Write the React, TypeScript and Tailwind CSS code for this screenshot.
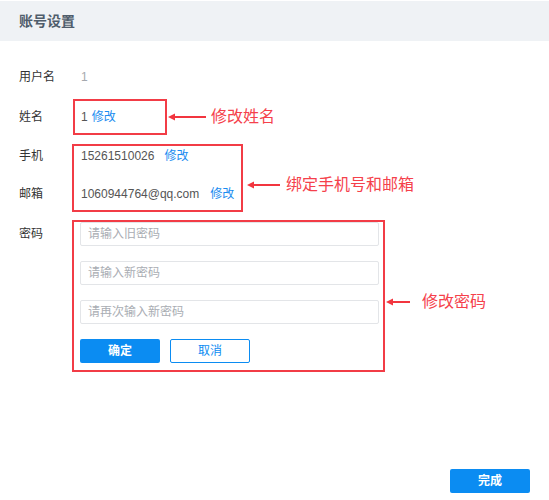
import React from "react";

const font = { fontFamily: '"Liberation Sans", "Noto Sans CJK SC", sans-serif' };

// small left-pointing red arrow used by the callouts
function Arrow({ length }: { length: number }) {
  return (
    <svg width={length} height={8} viewBox={`0 0 ${length} 8`} className="shrink-0">
      <line x1={4} y1={4} x2={length} y2={4} stroke="#f2353f" strokeWidth={2} />
      <polygon points="0,4 7,0.5 7,7.5" fill="#f2353f" />
    </svg>
  );
}

function Callout({ length, gap, text }: { length: number; gap: number; text: string }) {
  return (
    <div className="flex h-5 items-center">
      <Arrow length={length} />
      <span className="text-[16px] leading-5 text-[#f5414b]" style={{ marginLeft: gap }}>
        {text}
      </span>
    </div>
  );
}

function PwdInput({ placeholder }: { placeholder: string }) {
  return (
    <input
      type="password"
      placeholder={placeholder}
      className="h-[24px] w-[299px] rounded-[2px] border border-[#e3e5e8] bg-white px-[7px] text-[12px] text-[#555] outline-none placeholder:text-[#a9adb3]"
    />
  );
}

export default function App() {
  return (
    <div className="min-h-[500px] w-full bg-white pt-px" style={font}>
      {/* title bar */}
      <div className="flex h-[40px] items-center bg-[#eff2f5] pl-[19px]">
        <h1 className="text-[14px] font-semibold text-[#4f5d6b]">账号设置</h1>
      </div>

      <div className="pl-[19px] pt-[26px]">
        {/* 用户名 */}
        <div className="flex h-5 items-center text-[12px]">
          <span className="w-[54px] text-[#333]">用户名</span>
          <span className="pl-[8px] text-[#a5a9ae]">1</span>
        </div>

        {/* 姓名 */}
        <div className="mt-[12px] flex items-center text-[12px]">
          <span className="w-[54px] text-[#333]">姓名</span>
          <div className="flex h-[36px] w-[94px] items-center border-2 border-[#f23c46] pl-[6px]">
            <span className="text-[#555]">1</span>
            <a className="ml-[4px] cursor-pointer text-[#1a8cf0]">修改</a>
          </div>
          <div className="ml-[1px]">
            <Callout length={38} gap={5} text="修改姓名" />
          </div>
        </div>

        {/* 手机 / 邮箱 */}
        <div className="mt-[9px] flex items-start text-[12px]">
          <div className="flex w-[53px] flex-col gap-[18px] pt-[2px] text-[#333]">
            <span className="flex h-5 items-center">手机</span>
            <span className="flex h-5 items-center">邮箱</span>
          </div>
          <div className="flex h-[68px] w-[171px] flex-col gap-[18px] border-2 border-[#f23c46] pb-[6px] pl-[7px]">
            <div className="flex h-5 items-center">
              <span className="text-[#555]">15261510026</span>
              <a className="ml-[10px] cursor-pointer text-[#1a8cf0]">修改</a>
            </div>
            <div className="flex h-5 items-center">
              <span className="text-[#555]">1060944764@qq.com</span>
              <a className="ml-[11px] cursor-pointer text-[#1a8cf0]">修改</a>
            </div>
          </div>
          <div className="ml-[4px] mt-[31px]">
            <Callout length={33} gap={6} text="绑定手机号和邮箱" />
          </div>
        </div>

        {/* 密码 */}
        <div className="mt-[8px] flex items-start text-[12px]">
          <div className="flex h-[24px] w-[53px] items-center pt-[2px] text-[#333] box-content">密码</div>
          <div className="flex w-[313px] flex-col gap-[15px] border-2 border-[#f23c46] pb-[7px] pl-[6px]">
            <PwdInput placeholder="请输入旧密码" />
            <PwdInput placeholder="请输入新密码" />
            <PwdInput placeholder="请再次输入新密码" />
            <div className="flex gap-[10px]">
              <button className="h-[24px] w-[80px] rounded-[2px] bg-[#0b8cf2] text-[12px] font-semibold text-white">
                确定
              </button>
              <button className="h-[24px] w-[80px] rounded-[2px] border border-[#0b8cf2] bg-white text-[12px] text-[#0b8cf2]">
                取消
              </button>
            </div>
          </div>
          <div className="ml-[1px] mt-[72px]">
            <Callout length={24} gap={12} text="修改密码" />
          </div>
        </div>
      </div>

      {/* footer */}
      <div className="mt-[97px] flex justify-end pr-[19px]">
        <button className="h-[24px] w-[80px] rounded-[2px] bg-[#0b8cf2] text-[12px] font-semibold text-white">
          完成
        </button>
      </div>
    </div>
  );
}
